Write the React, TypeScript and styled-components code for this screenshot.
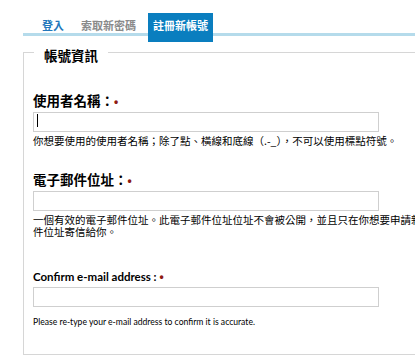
import styled, { createGlobalStyle } from "styled-components";

const GlobalStyle = createGlobalStyle`
  html, body {
    margin: 0;
    padding: 0;
    background: #fff;
    overflow: hidden;
  }
  body {
    font-family: "Noto Sans CJK TC", "Noto Sans", sans-serif;
    color: #000;
  }
`;

const Page = styled.div`
  width: 720px;
  padding: 13px 0 0 23px;
`;

const Tabs = styled.ul`
  display: flex;
  align-items: flex-start;
  list-style: none;
  margin: 0;
  padding: 0 0 0 14px;
  height: 20px;
  border-bottom: 3px solid #b5dbeb;
`;

const Tab = styled.li<{ $active?: boolean; $muted?: boolean }>`
  margin-right: 7px;
  padding: 5px 5px ${(p) => (p.$active ? "10px" : "0")};
  font-size: 11px;
  line-height: 14px;
  font-weight: 700;
  color: ${(p) => (p.$active ? "#fff" : p.$muted ? "#8a8a8a" : "#2277bb")};
  background: ${(p) => (p.$active ? "#0a7ebf" : "transparent")};
`;

const Fieldset = styled.fieldset`
  margin: 7px 0 0;
  padding: 30px 9px 26px;
  width: 655px;
  border: 1px solid #d6d6d6;
  min-width: 0;
`;

const Legend = styled.legend`
  margin-left: 1px;
  padding: 5px 10px 0;
  font-size: 13.5px;
  line-height: 14px;
  font-weight: 700;
`;

const Item = styled.div<{ $gap?: number }>`
  margin-top: ${(p) => p.$gap ?? 0}px;
`;

const Label = styled.label<{ $latin?: boolean }>`
  display: block;
  font-family: ${(p) =>
    p.$latin ? `Lato, "Noto Sans", sans-serif` : `"Noto Sans CJK TC", sans-serif`};
  font-size: ${(p) => (p.$latin ? "11.5px" : "13.5px")};
  line-height: 16px;
  font-weight: 700;
  margin-bottom: 2px;
`;

const Required = styled.span`
  color: #8e1b12;
  font-family: "Liberation Sans", sans-serif;
  font-size: 12px;
`;

const InputWrap = styled.div`
  position: relative;
  width: 346px;
`;

const TextInput = styled.input`
  display: block;
  box-sizing: border-box;
  width: 346px;
  height: 20px;
  margin: 0;
  padding: 0 4px;
  border: 1px solid #cfcfcf;
  background: #fff;
  outline: none;
`;

const Caret = styled.span`
  position: absolute;
  left: 4px;
  top: 2px;
  width: 1px;
  height: 13px;
  background: #000;
`;

const Description = styled.div<{ $latin?: boolean }>`
  margin-top: ${(p) => (p.$latin ? "9px" : "3px")};
  font-family: ${(p) =>
    p.$latin ? `Lato, "Noto Sans", sans-serif` : `"Noto Sans CJK TC", sans-serif`};
  font-size: ${(p) => (p.$latin ? "8.6px" : "10.5px")};
  line-height: 12px;
`;

export default function App() {
  return (
    <>
      <GlobalStyle />
      <Page>
        <Tabs>
          <Tab>登入</Tab>
          <Tab $muted>索取新密碼</Tab>
          <Tab $active>註冊新帳號</Tab>
        </Tabs>
        <Fieldset>
          <Legend>帳號資訊</Legend>
          <Item>
            <Label>
              使用者名稱：<Required>•</Required>
            </Label>
            <InputWrap>
              <TextInput type="text" />
              <Caret />
            </InputWrap>
            <Description>
              你想要使用的使用者名稱；除了點、橫線和底線（.-_），不可以使用標點符號。
            </Description>
          </Item>
          <Item $gap={24}>
            <Label>
              電子郵件位址：<Required>•</Required>
            </Label>
            <TextInput type="text" />
            <Description>
              一個有效的電子郵件位址。此電子郵件位址位址不會被公開，並且只在你想要申請新密碼或想要接收特定新聞或通知時，系統才會以此電子郵件位址寄信給你。
            </Description>
          </Item>
          <Item $gap={31}>
            <Label $latin>
              Confirm e-mail address : <Required>•</Required>
            </Label>
            <TextInput type="text" />
            <Description $latin>
              Please re-type your e-mail address to confirm it is accurate.
            </Description>
          </Item>
        </Fieldset>
      </Page>
    </>
  );
}
